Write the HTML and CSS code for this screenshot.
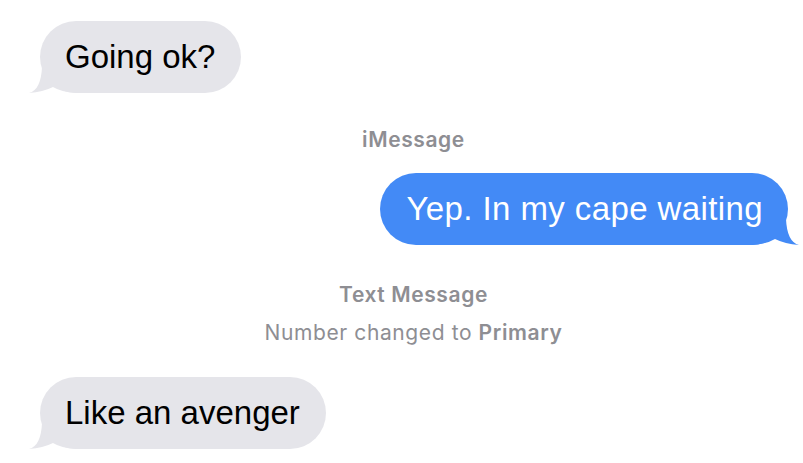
FILE: index.html
```html
<!DOCTYPE html>
<html lang="en">
<head>
    <meta charset="UTF-8">
    <meta name="viewport" content="width=device-width, initial-scale=1.0">
    <title>Messages</title>
    <link rel="stylesheet" href="styles.css">
</head>
<body>

    <div class="thread">
        <div class="bubble received">
            Going ok?
            <svg class="tail" viewBox="-12 -30 50 30"><path d="M2,-26 Q1,-3 -11,0 Q3,-1 13,-6 Q21,-1 36,0 L36,-26 Z"/></svg>
        </div>

        <div class="notice service">iMessage</div>

        <div class="bubble sent">
            Yep. In my cape waiting
            <svg class="tail" viewBox="-12 -30 50 30"><path d="M2,-26 Q1,-3 -11,0 Q3,-1 13,-6 Q21,-1 36,0 L36,-26 Z"/></svg>
        </div>

        <div class="notice service second">Text Message</div>
        <div class="notice change">Number changed to <b>Primary</b></div>

        <div class="bubble received last">
            Like an avenger
            <svg class="tail" viewBox="-12 -30 50 30"><path d="M2,-26 Q1,-3 -11,0 Q3,-1 13,-6 Q21,-1 36,0 L36,-26 Z"/></svg>
        </div>
    </div>

</body>
</html>
```

FILE: styles.css
```css
body {
    margin: 0;
    background-color: #ffffff;
    font-family: "Liberation Sans", Arial, sans-serif;
}

.thread {
    display: flex;
    flex-direction: column;
    padding-top: 21px;
}

.bubble {
    position: relative;
    isolation: isolate;
    height: 72px;
    line-height: 72px;
    padding: 0 26px 0 25px;
    border-radius: 36px;
    font-size: 33px;
    white-space: nowrap;
}

.received {
    align-self: flex-start;
    margin-left: 40px;
    background-color: #e5e5ea;
    color: #000000;
    fill: #e5e5ea;
}

.sent {
    align-self: flex-end;
    margin-right: 15px;
    margin-top: 21px;
    padding: 0 25px 0 26px;
    letter-spacing: 0.4px;
    background-color: #438af6;
    color: #ffffff;
    fill: #438af6;
}

.last {
    margin-top: 32px;
}

.tail {
    position: absolute;
    z-index: -1;
    bottom: 0;
    left: -12px;
    width: 50px;
    height: 30px;
    overflow: visible;
}

.sent .tail {
    left: auto;
    right: -12px;
    transform: scaleX(-1);
}

.notice {
    margin-left: 24px;
    text-align: center;
    font-family: Inter, "Liberation Sans", sans-serif;
    font-size: 21px;
    line-height: 24px;
    letter-spacing: 0.6px;
    color: #8e8e93;
}

.service {
    margin-top: 35px;
    font-weight: 600;
}

.service.second {
    margin-top: 38px;
}

.change {
    margin-top: 14px;
}

.change b {
    font-weight: 600;
}
```
